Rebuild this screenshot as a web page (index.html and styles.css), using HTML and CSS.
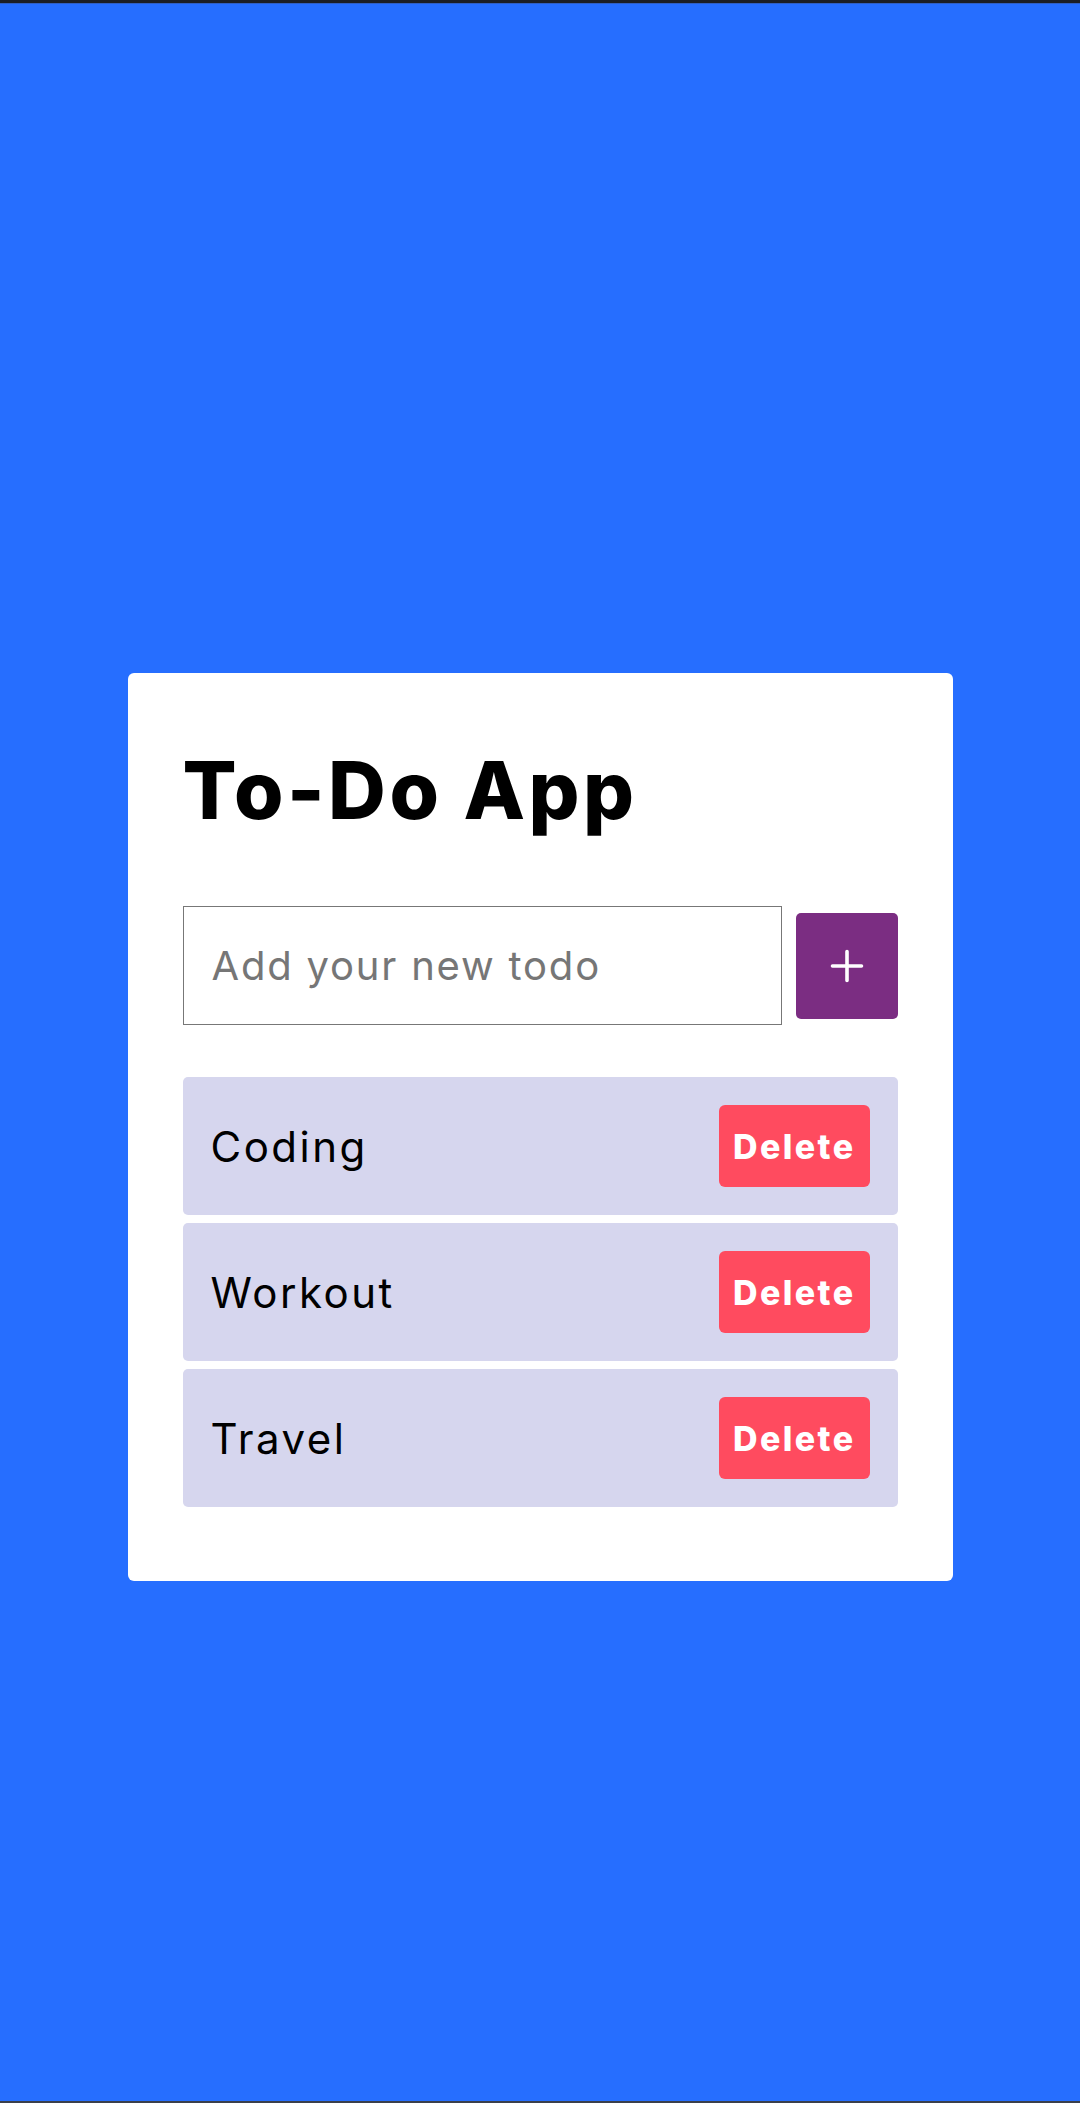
FILE: index.html
```html
<!DOCTYPE html>
<html lang="en">
<head>
<meta charset="utf-8">
<title>To-Do App</title>
<link rel="stylesheet" href="styles.css">
</head>
<body>
<div class="topbar"></div>
<main class="stage">
  <section class="card">
    <h1 class="title">To-Do App</h1>
    <form class="add-row">
      <input class="add-input" type="text" placeholder="Add your new todo">
      <button class="add-btn" type="button" aria-label="Add">
        <svg width="34" height="34" viewBox="0 0 34 34"><path d="M17 2.5V31.5M2.5 17H31.5" stroke="#fff" stroke-width="3.6" stroke-linecap="round" fill="none"/></svg>
      </button>
    </form>
    <ul class="todo-list">
      <li class="todo-item"><span class="todo-text">Coding</span><button class="del-btn" type="button">Delete</button></li>
      <li class="todo-item"><span class="todo-text">Workout</span><button class="del-btn" type="button">Delete</button></li>
      <li class="todo-item"><span class="todo-text">Travel</span><button class="del-btn" type="button">Delete</button></li>
    </ul>
  </section>
</main>
<div class="bottombar"></div>
</body>
</html>
```

FILE: styles.css
```css
html, body {
  margin: 0;
  padding: 0;
}
body {
  background: #266eff;
  font-family: "Inter", "Noto Sans", sans-serif;
  height: 2103px;
  display: flex;
  flex-direction: column;
}
.topbar {
  height: 4px;
  background: #1b1e26;
  border-bottom: 1px solid #2f5fc4;
  box-sizing: border-box;
}
.stage {
  flex: 1;
  padding-top: 669px;
}
.bottombar {
  height: 2px;
  background: #3a3f4b;
}
.card {
  width: 825px;
  margin: 0 auto;
  background: #fff;
  border-radius: 6px;
  padding: 68px 55px 74px;
  box-sizing: border-box;
}
.title {
  margin: 0;
  font-size: 80px;
  line-height: 97px;
  font-weight: 800;
  color: #000;
  letter-spacing: 3.5px;
}
.add-row {
  margin: 68px 0 0;
  display: flex;
  align-items: center;
  gap: 14px;
}
.add-input {
  flex: 1 1 0;
  min-width: 0;
  width: 0;
  height: 119px;
  box-sizing: border-box;
  border: 1.5px solid #777;
  border-radius: 0;
  padding: 0 28px;
  font-family: inherit;
  font-size: 40px;
  letter-spacing: 1.8px;
  color: #000;
  outline: none;
}
.add-input::placeholder {
  color: #767676;
}
.add-btn {
  flex: none;
  width: 102px;
  height: 106px;
  border: none;
  border-radius: 5px;
  background: #7b2d82;
  display: flex;
  align-items: center;
  justify-content: center;
  padding: 0;
}
.todo-list {
  list-style: none;
  margin: 52px 0 0;
  padding: 0;
  display: flex;
  flex-direction: column;
  gap: 8px;
}
.todo-item {
  background: #d6d6ee;
  border-radius: 5px;
  padding: 28px;
  display: flex;
  align-items: center;
  justify-content: space-between;
}
.todo-text {
  font-size: 42px;
  letter-spacing: 2.5px;
  color: #000;
}
.del-btn {
  flex: none;
  height: 82px;
  padding: 0 14px;
  border: none;
  border-radius: 6px;
  background: #ff4b5f;
  color: #fff;
  font-family: inherit;
  font-size: 34px;
  font-weight: 800;
  letter-spacing: 2.4px;
}
```
